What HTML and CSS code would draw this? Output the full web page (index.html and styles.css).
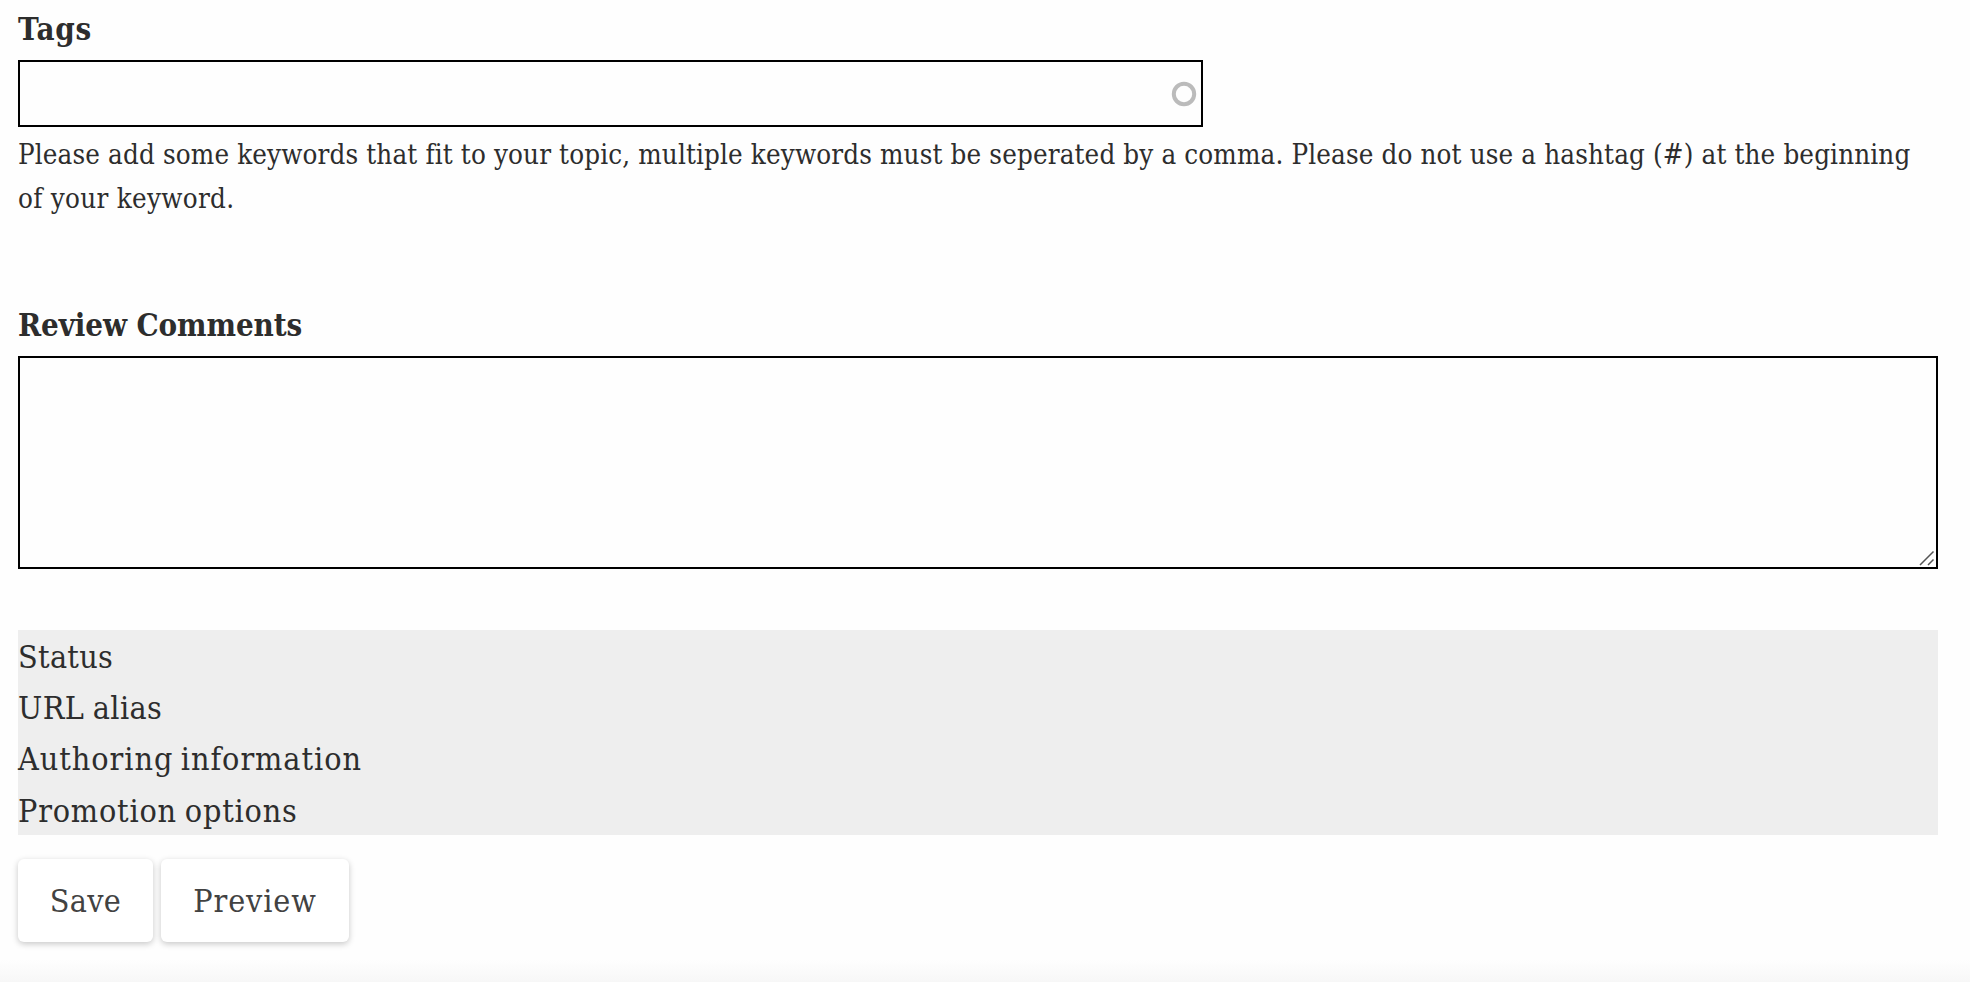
FILE: index.html
```
<!DOCTYPE html>
<html lang="en">
<head>
<meta charset="utf-8">
<title>Edit topic</title>
<link rel="stylesheet" href="styles.css">
</head>
<body>
<form class="form">
  <div class="field">
    <label class="label" for="tags"><span class="t-tags">Tags</span></label>
    <div class="tags-control">
      <input class="input" id="tags" type="text">
      <svg class="throbber" viewBox="0 0 26 26"><circle cx="13" cy="13" r="10.2"/></svg>
    </div>
    <p class="help"><span class="t-help1">Please add some keywords that fit to your topic, multiple keywords must be seperated by a comma. Please do not use a hashtag (#) at the beginning</span><br><span class="t-help2">of your keyword.</span></p>
  </div>
  <div class="field review">
    <label class="label" for="comments"><span class="t-review">Review Comments</span></label>
    <div class="comments-control">
      <textarea class="textarea" id="comments"></textarea>
      <svg class="grip" viewBox="0 0 16 16"><path d="M1 15 14.5 1.5M9 15l5.5-5.5"/></svg>
    </div>
  </div>
  <ul class="options">
    <li><span class="t-status">Status</span></li>
    <li><span class="t-url">URL alias</span></li>
    <li><span class="t-author">Authoring information</span></li>
    <li><span class="t-promo">Promotion options</span></li>
  </ul>
  <div class="actions">
    <button class="button save" type="button"><span class="t-save">Save</span></button>
    <button class="button preview" type="button"><span class="t-preview">Preview</span></button>
  </div>
</form>
<div class="fade"></div>
</body>
</html>
```
FILE: styles.css
```
* { box-sizing: border-box; }
body {
  margin: 0;
  height: 982px;
  display: flex;
  flex-direction: column;
  overflow: hidden;
  background: #fefefe;
  color: #2d2d2d;
  font: 32px/51.2px "Roboto Slab", "DejaVu Serif Condensed", "DejaVu Serif", serif;
  font-stretch: condensed;
}
.form { padding: 4px 32px 0 18px; }
.label { display: block; height: 56px; font-size: 31px; line-height: 51px; font-weight: 700; white-space: nowrap; }
.tags-control { position: relative; width: 1185px; height: 67px; }
.input, .textarea {
  display: block; width: 100%; height: 100%; margin: 0;
  border: 2px solid #000; border-radius: 0; background: #fefefe; outline: 0; resize: none;
}
.throbber { position: absolute; right: 6px; top: 21px; width: 26px; height: 26px; fill: none; stroke: #bbb; stroke-width: 4; }
.help { margin: 5px 0 0; font-size: 27.5px; line-height: 44px; white-space: nowrap; }
.review { margin-top: 80px; }
.comments-control { position: relative; height: 213px; }
.grip { position: absolute; right: 3px; bottom: 3px; width: 16px; height: 16px; fill: none; stroke: #555; stroke-width: 1.5; }
.options { margin: 61px 0 0; padding: 2px 0 0; height: 205px; list-style: none; background: #eee; }
.actions { display: flex; gap: 8px; margin-top: 24px; }
.button {
  height: 83px; padding: 3px 0 0; border: 0; border-radius: 6px; background: #fff; color: #424242;
  font: inherit; box-shadow: 0 2px 6px rgba(0,0,0,.22);
}
.save { width: 135px; }
.preview { width: 188px; }
.fade { height: 22px; margin-top: auto; background: linear-gradient(#fefefe, #f7f7f7); }
.t-tags { letter-spacing: .7px; }
.t-review { letter-spacing: -.1px; }
.t-help1 { letter-spacing: .14px; }
.t-help2 { letter-spacing: .3px; }
.t-status { letter-spacing: .3px; }
.t-url { letter-spacing: .4px; word-spacing: -1px; }
.t-author { letter-spacing: .95px; word-spacing: -2.5px; }
.t-promo { letter-spacing: .8px; word-spacing: -2px; }
.t-save { letter-spacing: .3px; }
.t-preview { letter-spacing: .9px; }
```
